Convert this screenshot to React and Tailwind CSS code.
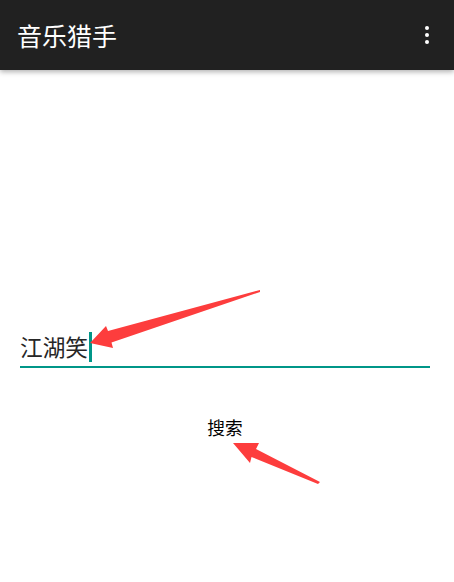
import React from "react";

const font = { fontFamily: '"Noto Sans CJK SC", "Noto Sans", sans-serif' };

export default function App() {
  return (
    <div className="relative w-[454px] h-[582px] bg-white overflow-hidden" style={font}>
      <div className="relative z-10 h-[70px] bg-[#212121] flex items-center pl-[17px] pr-[25px] shadow-[0_2px_5px_rgba(0,0,0,0.3)]">
        <span className="text-[25px] leading-[30px] text-white">音乐猎手</span>
        <div className="ml-auto flex flex-col items-center gap-[3px]">
          <span className="block w-[4px] h-[4px] rounded-full bg-white" />
          <span className="block w-[4px] h-[4px] rounded-full bg-white" />
          <span className="block w-[4px] h-[4px] rounded-full bg-white" />
        </div>
      </div>

      <div className="pt-[262px] px-[20px]">
        <div className="w-[410px]">
          <div className="h-[30px] flex items-center">
            <span className="text-[22.7px] leading-[30px] text-[#262626]">江湖笑</span>
            <span className="block w-[3px] h-[30px] bg-[#009688] ml-[1px]" />
          </div>
          <div className="mt-[4px] h-[2px] bg-[#009688]" />
        </div>
        <div className="mt-[47px] flex justify-center pr-[4px]">
          <span className="text-[17.7px] leading-[24px] text-black">搜索</span>
        </div>
      </div>

      <svg className="absolute inset-0 pointer-events-none" width="454" height="582" viewBox="0 0 454 582">
        <polygon
          fill="#fd3d3d"
          points="90,343 106,326 108,331 260,290 260,292 111.5,342.5 113,348"
        />
        <polygon
          fill="#fd3d3d"
          points="233,443 259,443 256,449 320,482 318,484 251.5,457 250,463"
        />
      </svg>
    </div>
  );
}
